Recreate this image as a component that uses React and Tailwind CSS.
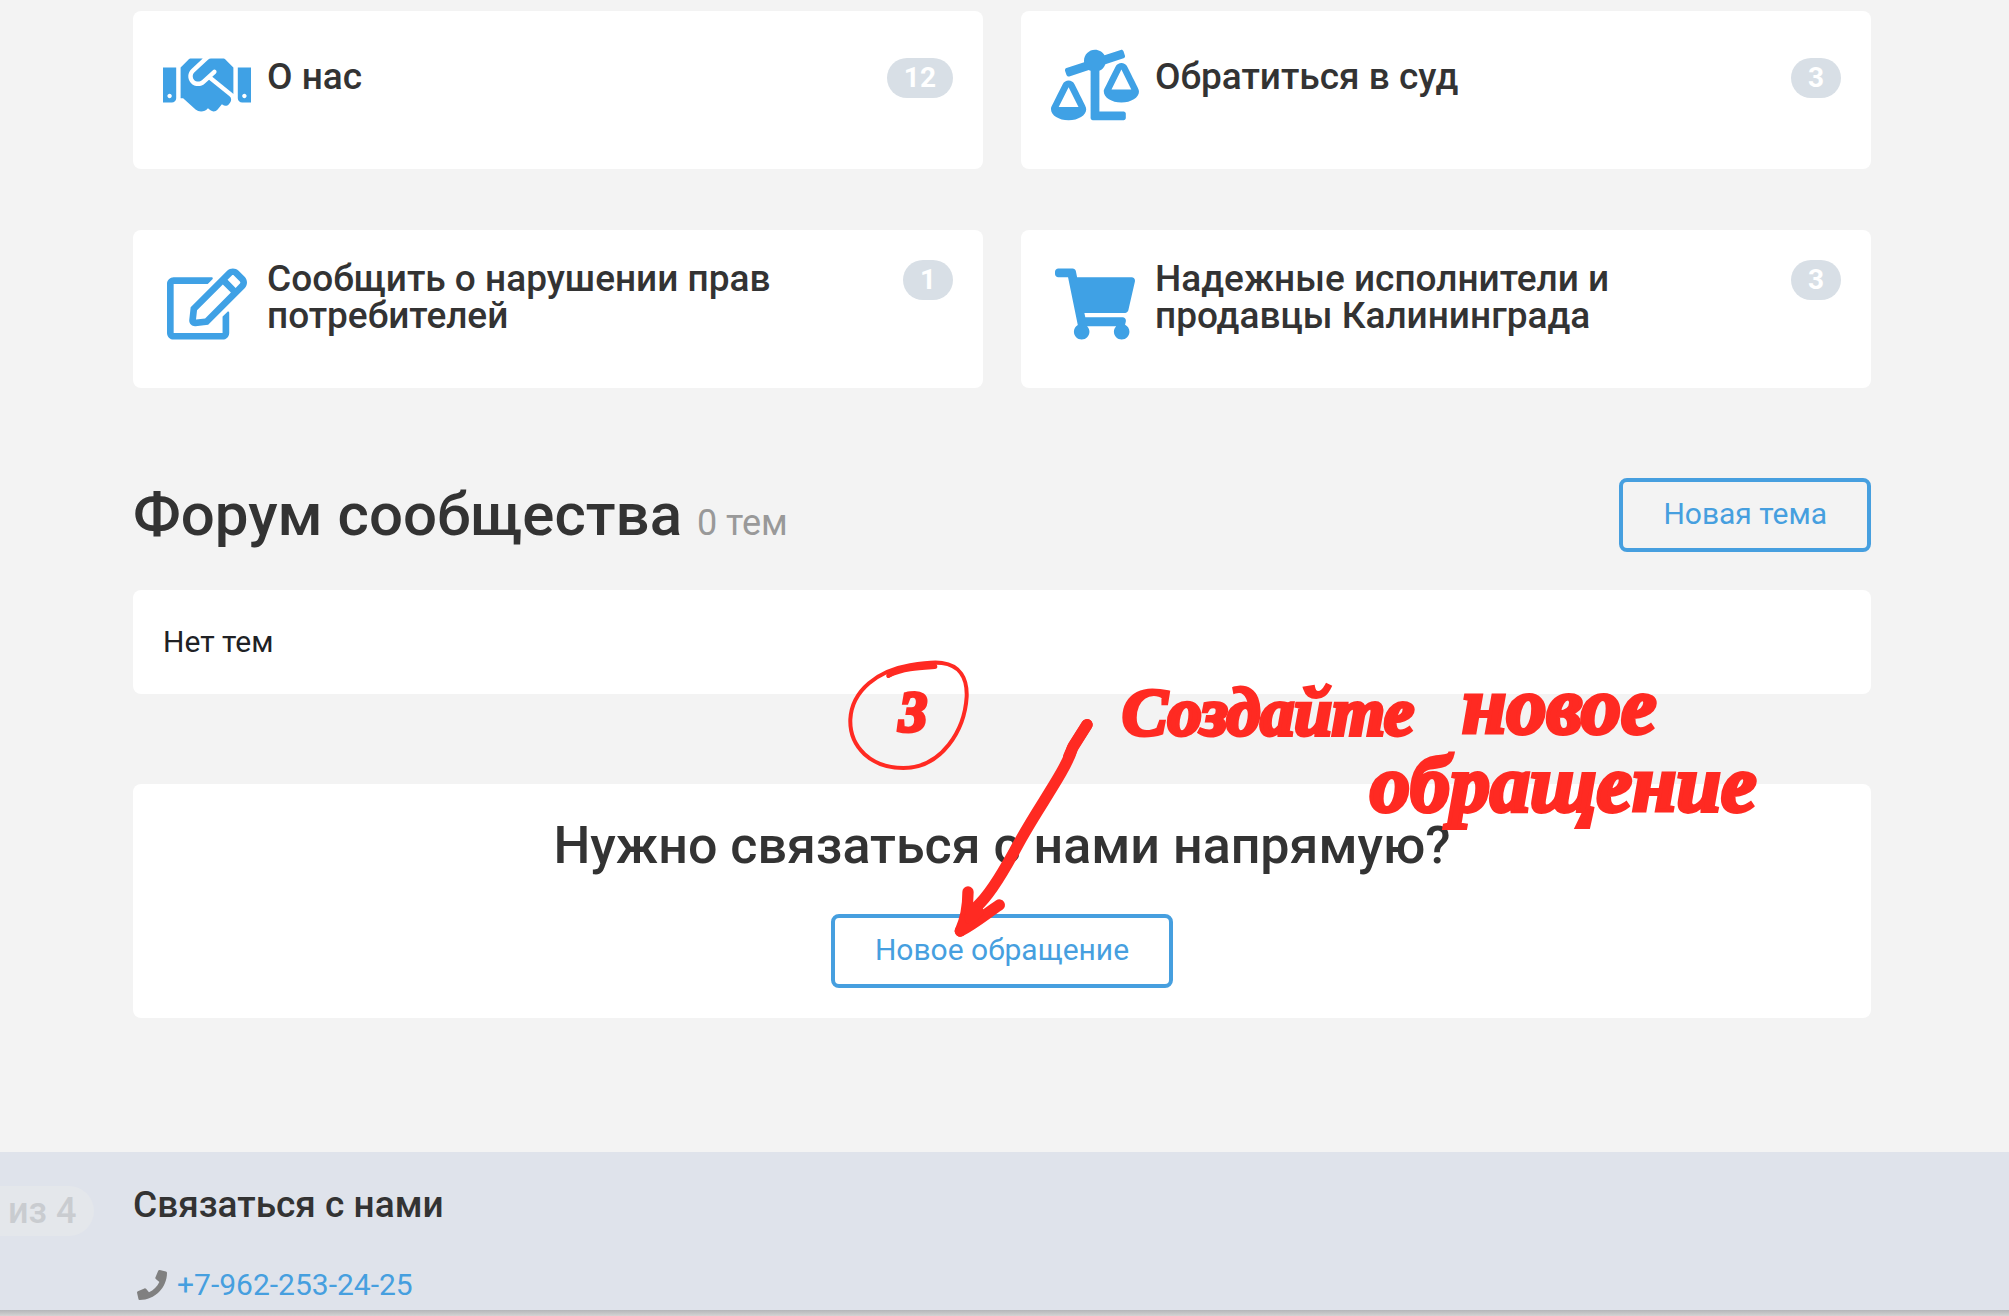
import {
  FaHandshake,
  FaBalanceScaleLeft,
  FaRegEdit,
  FaShoppingCart,
  FaPhone
} from 'react-icons/fa'

const sections = [
  { title: 'О нас', count: 12, Icon: FaHandshake, iconWidth: 'w-[88px]' },
  { title: 'Обратиться в суд', count: 3, Icon: FaBalanceScaleLeft, iconWidth: 'w-[88px]' },
  { title: 'Сообщить о нарушении прав потребителей', count: 1, Icon: FaRegEdit, iconWidth: 'w-20' },
  { title: 'Надежные исполнители и продавцы Калининграда', count: 3, Icon: FaShoppingCart, iconWidth: 'w-20' }
]

function SectionCard({ title, count, Icon, iconWidth }) {
  return (
    <a href="#section" className="flex items-start gap-4 rounded-lg bg-white px-[30px] pt-[30px] pb-12">
      <span className="mt-2 flex w-[88px] shrink-0 justify-center text-[#3fa1e5]">
        <Icon className={`h-[72px] ${iconWidth}`} />
      </span>
      <span className="flex min-h-20 grow items-center">
        <span className="mb-[6px] flex grow items-start justify-between gap-4">
          <span className="max-w-[540px] text-[37px] leading-[37px] font-medium">{title}</span>
          <span className="rounded-full bg-[#d8dfe6] px-[17px] text-[28px] leading-10 font-bold text-white">
            {count}
          </span>
        </span>
      </span>
    </a>
  )
}

function OutlineButton({ children }) {
  return (
    <button
      type="button"
      className="rounded-lg border-4 border-[#469fdf] px-10 pt-3 pb-[14px] text-[30px] leading-10 text-[#469fdf]"
    >
      {children}
    </button>
  )
}

// red marker notes lying over the page
function MarkerNotes() {
  return (
    <div className="pointer-events-none absolute top-0 left-0 font-['Liberation_Serif',serif] font-bold text-[#ff2a22] italic [-webkit-text-stroke:4px_#ff2a22]">
      <svg
        viewBox="0 0 900 1080"
        className="absolute top-[640px] left-[820px] h-[360px] w-[300px]"
        fill="none"
        stroke="currentColor"
        strokeLinecap="round"
        strokeLinejoin="round"
      >
        <path strokeWidth="12" d="M205 108C250 76 320 66 366 69C420 76 442 115 440 170C434 270 366 384 250 384C155 384 88 322 91 238C96 150 175 92 270 76C310 69 350 66 366 69" />
        <path strokeWidth="16" d="M208 104C250 84 300 82 344 79" />
        <path strokeWidth="34" d="M801 254L757 325C735 400 640 520 580 640C550 695 510 765 470 800L421 873" />
        <path strokeWidth="34" d="M801 254L760 318L746 350" />
        <path strokeWidth="34" d="M444 756C444 800 436 840 421 873C465 850 500 820 538 795" />
        <path strokeWidth="34" d="M455 810L450 835L475 815" />
      </svg>
      <span className="absolute top-[680px] left-[899px] text-[56px] leading-[64px]">3</span>
      <span className="absolute top-[680px] left-[1122px] text-[68px] leading-[64px]">Создайте</span>
      <span className="absolute top-[674px] left-[1462px] text-[80px] leading-[64px]">новое</span>
      <span className="absolute top-[752px] left-[1370px] text-[80px] leading-[64px]">обращение</span>
    </div>
  )
}

function App() {
  return (
    <div className="relative flex min-h-screen flex-col overflow-hidden bg-[#f3f3f3] font-[Roboto,sans-serif] text-[#333]">
      <main className="pt-[11px] pr-[138px] pb-[134px] pl-[133px]">
        <div className="grid grid-cols-2 gap-x-[38px] gap-y-[61px]">
          {sections.map((section) => (
            <SectionCard key={section.title} {...section} />
          ))}
        </div>

        <div className="mt-[90px] flex items-center justify-between">
          <h2 className="text-[60px] leading-[72px] font-medium">
            Форум сообщества <small className="text-[36px] leading-none font-normal text-[#999]">0 тем</small>
          </h2>
          <OutlineButton>Новая тема</OutlineButton>
        </div>

        <p className="mt-[38px] rounded-lg bg-white px-[30px] py-8 text-[30px] leading-10 text-[#202124]">
          Нет тем
        </p>

        <section className="mt-[90px] flex flex-col items-center rounded-lg bg-white pt-[30px] pb-[30px]">
          <h2 className="mb-9 text-[52px] leading-[64px] font-medium">
            Нужно связаться с нами напрямую?
          </h2>
          <OutlineButton>Новое обращение</OutlineButton>
        </section>
      </main>

      <footer className="relative grow bg-[#dfe3eb] pt-[33px] pr-[138px] pl-[133px]">
        <h3 className="text-[37px] leading-10 font-medium">Связаться с нами</h3>
        <a
          href="tel:+79622532425"
          className="mt-10 flex items-center gap-[10px] pl-1 text-[30px] leading-10 text-[#469fdf]"
        >
          <FaPhone className="text-[30px] text-[#808080]" />
          +7-962-253-24-25
        </a>
        <div className="absolute top-[34px] left-0 rounded-r-full bg-[#e4e7eb] pr-[18px] pl-2 text-[36px] leading-[50px] font-medium text-[#c9ccd0]">
          из 4
        </div>
      </footer>
      <div className="h-[6px] bg-linear-to-b from-[#b4b5b8] to-[#d4d4d4]" />

      <MarkerNotes />
    </div>
  )
}

export default App
